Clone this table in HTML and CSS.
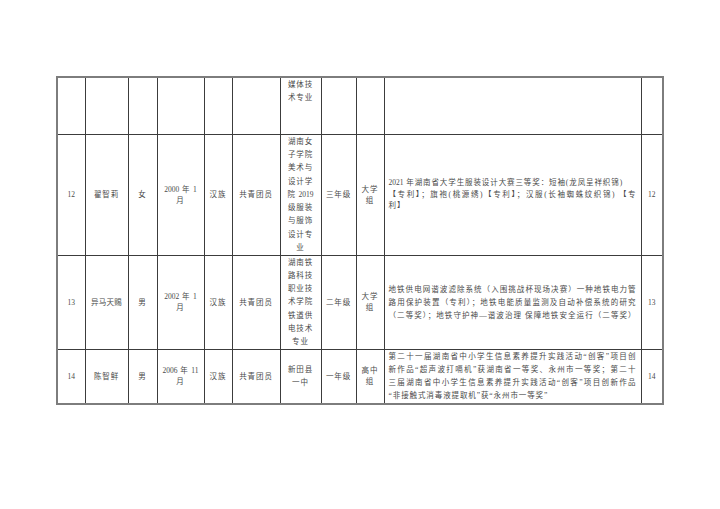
FILE: index.html
```html
<!DOCTYPE html>
<html lang="zh">
<head>
<meta charset="utf-8">
<link rel="stylesheet" href="styles.css">
</head>
<body>
<div class="page">
<table class="grid">
<colgroup>
<col class="c-no"><col class="c-name"><col class="c-sex"><col class="c-birth"><col class="c-nation"><col class="c-party"><col class="c-major"><col class="c-grade"><col class="c-group"><col class="c-award"><col class="c-no2">
</colgroup>
<tr class="r1">
<td></td><td></td><td></td><td></td><td></td><td></td>
<td class="major top">媒体技<br>术专业</td>
<td></td><td></td><td></td><td></td>
</tr>
<tr class="r2">
<td class="num">12</td>
<td>翟智莉</td>
<td>女</td>
<td><span class="d">2000</span> 年 <span class="d">1</span><br>月</td>
<td>汉族</td>
<td>共青团员</td>
<td class="major">湖南女<br>子学院<br>美术与<br>设计学<br>院 <span class="d">2019</span><br>级服装<br>与服饰<br>设计专<br>业</td>
<td>三年级</td>
<td>大学<br>组</td>
<td class="award a12"><span class="last"><span class="d">2021</span> 年湖南省大学生服装设计大赛三等奖：短袖(龙凤呈祥织锦)</span><span class="ln">【专利】；旗袍(桃源绣)【专利】；汉服(长袖蜘蛛纹织锦) 【专</span><span class="last">利】</span></td>
<td class="num">12</td>
</tr>
<tr class="r3">
<td class="num">13</td>
<td class="tight">异马天赐</td>
<td>男</td>
<td><span class="d">2002</span> 年 <span class="d">1</span><br>月</td>
<td>汉族</td>
<td>共青团员</td>
<td class="major">湖南铁<br>路科技<br>职业技<br>术学院<br>铁道供<br>电技术<br>专业</td>
<td>二年级</td>
<td>大学<br>组</td>
<td class="award"><span class="ln">地铁供电网谐波滤除系统（入围挑战杯现场决赛）一种地铁电力管</span><span class="ln">路用保护装置（专利）；地铁电能质量监测及自动补偿系统的研究</span><span class="ln">（二等奖）；地铁守护神—谐波治理 保障地铁安全运行（二等奖）</span></td>
<td class="num">13</td>
</tr>
<tr class="r4">
<td class="num">14</td>
<td>陈智鲜</td>
<td>男</td>
<td><span class="d">2006</span> 年 <span class="d">11</span><br>月</td>
<td>汉族</td>
<td>共青团员</td>
<td class="major">新田县<br>一中</td>
<td>一年级</td>
<td>高中<br>组</td>
<td class="award"><span class="ln">第二十一届湖南省中小学生信息素养提升实践活动“创客”项目创</span><span class="ln">新作品“超声波打嗝机”获湖南省一等奖、永州市一等奖；第二十</span><span class="ln">三届湖南省中小学生信息素养提升实践活动“创客”项目创新作品</span><span class="last">“非接触式消毒液提取机”获“永州市一等奖”</span></td>
<td class="num">14</td>
</tr>
</table>
</div>
</body>
</html>
```
FILE: styles.css
```css
html, body {
  margin: 0;
  padding: 0;
  background: #ffffff;
}
.page {
  padding: 76px 0 0 56px;
}
.grid {
  border-collapse: collapse;
  table-layout: fixed;
  width: 607px;
  border: 2px solid #7d7d7d;
  font-family: "Liberation Serif", "Noto Sans CJK SC", serif;
  font-size: 7.5px;
  color: #4a4a4a;
  letter-spacing: 0.9px;
}
.grid td {
  border: 1px solid #3c3c3c;
  padding: 0 2px;
  text-align: center;
  vertical-align: middle;
  line-height: 11px;
  overflow: hidden;
}
.c-no { width: 28px; }
.c-name { width: 43px; }
.c-sex { width: 29px; }
.c-birth { width: 47px; }
.c-nation { width: 28px; }
.c-party { width: 48px; }
.c-major { width: 41px; }
.c-grade { width: 35px; }
.c-group { width: 28px; }
.c-award { width: 257px; }
.c-no2 { width: 22px; }
.r1 { height: 57px; }
.r2 { height: 121px; }
.r3 { height: 92px; }
.r4 { height: 55px; }
.grid td.major {
  line-height: 13.3px;
  padding: 0 1px;
}
.grid td.top {
  vertical-align: top;
}
.grid td.num {
  letter-spacing: 0;
}
.d {
  letter-spacing: 0;
}
.grid td.tight {
  letter-spacing: 0.3px;
}
.grid td.award {
  text-align: left;
  padding: 0 4px;
  line-height: 13px;
  letter-spacing: 0.9px;
}
.grid td.a12 {
  line-height: 11.8px;
}
.ln {
  display: block;
  text-align: justify;
  text-align-last: justify;
  white-space: nowrap;
}
.last {
  display: block;
  text-align: left;
  white-space: nowrap;
}
```
